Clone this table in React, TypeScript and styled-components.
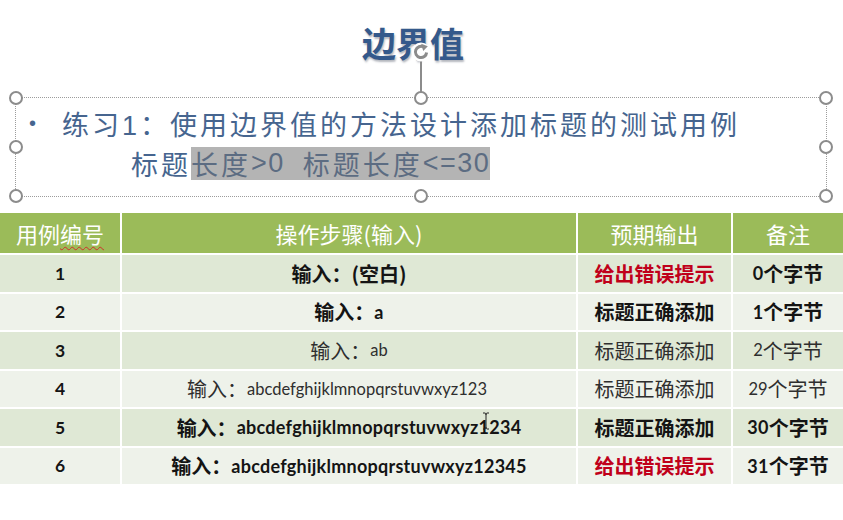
import React from "react";
import styled, { createGlobalStyle } from "styled-components";

const Global = createGlobalStyle`
  html, body { margin: 0; padding: 0; background: #ffffff; }
  body { font-family: "Liberation Sans", "Noto Sans CJK SC", sans-serif; }
`;

const CJK = `"Liberation Sans", "Noto Sans CJK SC", sans-serif`;
const TABLE_FONT = `"Lato", "Noto Sans CJK SC", sans-serif`;

const Slide = styled.div`
  position: relative;
  width: 843px;
  height: 520px;
  background: #ffffff;
  display: flex;
  flex-direction: column;
  overflow: hidden;
`;

const TitleBar = styled.header`
  height: 97px;
  box-sizing: border-box;
  padding-top: 23px;
  display: flex;
  justify-content: center;
  align-items: flex-start;
`;

const Title = styled.h1`
  margin: 0 17px 0 0;
  font: 700 34px/40px "Noto Sans CJK SC", sans-serif;
  color: #34598b;
  text-shadow: 1px 2px 2px rgba(40, 50, 70, 0.35);
`;

const TextBox = styled.section`
  position: relative;
  box-sizing: border-box;
  height: 100px;
  margin: 0 16px 0 15px;
  border: 1px dotted #9c9c9c;
  padding-top: 5px;
  font-family: ${CJK};
  font-size: 27px;
  color: #46658f;
  letter-spacing: 3px;
`;

const Line = styled.div<{ $indent: number }>`
  height: 40px;
  display: flex;
  align-items: center;
  padding-left: ${(p) => p.$indent}px;
  white-space: pre;
`;

const Bullet = styled.span`
  width: 33px;
  font-size: 20px;
  letter-spacing: 0;
  color: #46658f;
`;

const Highlight = styled.span`
  height: 33px;
  display: flex;
  align-items: center;
  background: #b4b4b4;
  color: #5c6c82;
`;

const Latin = styled.span`
  letter-spacing: 1.5px;
`;

const Handle = styled.span<{ $x: number; $y: number }>`
  position: absolute;
  left: calc(${(p) => p.$x}% - 7px);
  top: calc(${(p) => p.$y}% - 7px);
  width: 10px;
  height: 10px;
  border-radius: 50%;
  border: 2px solid #8c8c8c;
  background: #ffffff;
`;

const RotateStem = styled.span`
  position: absolute;
  left: calc(50% - 1px);
  bottom: calc(100% + 6px);
  width: 2px;
  height: 33px;
  background: #8c8c8c;
`;

const RotateIcon = styled.svg`
  position: absolute;
  left: calc(50% - 10px);
  bottom: calc(100% + 36px);
  width: 20px;
  height: 20px;
`;

const Table = styled.div`
  margin-top: 16px;
  display: flex;
  flex-direction: column;
  gap: 2px;
  font-family: ${TABLE_FONT};
`;

const Row = styled.div<{ $h: number }>`
  display: grid;
  grid-template-columns: 120px 454px 153px 1fr;
  column-gap: 2px;
  height: ${(p) => p.$h}px;
`;

type Band = "head" | "odd" | "even";
const bandColor: Record<Band, string> = {
  head: "#9bbb59",
  odd: "#dfe8d5",
  even: "#eef2ea",
};

const Cell = styled.div<{ $band: Band; $bold?: boolean; $red?: boolean; $num?: boolean; $shift?: number }>`
  display: flex;
  align-items: center;
  justify-content: center;
  white-space: pre;
  padding-right: ${(p) => p.$shift ?? 0}px;
  background: ${(p) => bandColor[p.$band]};
  font-size: ${(p) => (p.$num ? 17.5 : p.$bold ? 18 : 16.5)}px;
  letter-spacing: ${(p) => (p.$bold && !p.$num ? 0.25 : 0)}px;
  font-weight: ${(p) => (p.$bold ? 700 : 400)};
  color: ${(p) => (p.$band === "head" ? "#ffffff" : p.$red ? "#c0001a" : p.$bold ? "#141414" : "#2e2e2e")};
`;

const Zh = styled.span<{ $size?: number }>`
  font-size: ${(p) => p.$size ?? 20}px;
  letter-spacing: 0;
  font-family: "Noto Sans CJK SC", sans-serif;
`;

const Typo = styled.span`
  text-decoration: underline wavy #d0302a;
  text-decoration-thickness: 1px;
  text-underline-offset: 3px;
`;

const IBeam = styled.svg`
  position: absolute;
  left: 482px;
  top: 412px;
  width: 8px;
  height: 18px;
`;

type RowData = {
  no: string;
  input: string;
  out: string;
  note: string;
  bold: boolean;
  red: boolean;
  shift?: number;
};

const rows: RowData[] = [
  { no: "1", input: "(空白)", out: "给出错误提示", note: "0", bold: true, red: true },
  { no: "2", input: "a", out: "标题正确添加", note: "1", bold: true, red: false },
  { no: "3", input: "ab", out: "标题正确添加", note: "2", bold: false, red: false },
  { no: "4", input: "abcdefghijklmnopqrstuvwxyz123", out: "标题正确添加", note: "29", bold: false, red: false, shift: 24 },
  { no: "5", input: "abcdefghijklmnopqrstuvwxyz1234", out: "标题正确添加", note: "30", bold: true, red: false },
  { no: "6", input: "abcdefghijklmnopqrstuvwxyz12345", out: "给出错误提示", note: "31", bold: true, red: true },
];

export default function App() {
  return (
    <>
      <Global />
      <Slide>
        <TitleBar>
          <Title>边界值</Title>
        </TitleBar>

        <TextBox>
          <Line $indent={13}>
            <Bullet>•</Bullet>
            练习1：使用边界值的方法设计添加标题的测试用例
          </Line>
          <Line $indent={115}>
            标题
            <Highlight>
              长度<Latin>&gt;0  </Latin>标题长度<Latin>&lt;=30</Latin>
            </Highlight>
          </Line>
          <RotateStem />
          <RotateIcon viewBox="0 0 20 20">
            <circle cx="10" cy="10" r="9.5" fill="#ffffff" />
            <path d="M15.6 10.5 A5.6 5.6 0 1 1 12.6 5" fill="none" stroke="#8c8c8c" strokeWidth="3" />
            <path d="M10.2 1.8 L16.8 4.2 L12.2 9 Z" fill="#8c8c8c" />
          </RotateIcon>
          {[
            [0, 0], [50, 0], [100, 0],
            [0, 50], [100, 50],
            [0, 100], [50, 100], [100, 100],
          ].map(([x, y]) => (
            <Handle key={`${x}-${y}`} $x={x} $y={y} />
          ))}
        </TextBox>

        <Table>
          <Row $h={40}>
            <Cell $band="head"><Zh $size={22}>用例<Typo>编号</Typo></Zh></Cell>
            <Cell $band="head"><Zh $size={22}>操作步骤(输入)</Zh></Cell>
            <Cell $band="head"><Zh $size={22}>预期输出</Zh></Cell>
            <Cell $band="head"><Zh $size={22}>备注</Zh></Cell>
          </Row>
          {rows.map((r, i) => {
            const band: Band = i % 2 === 0 ? "odd" : "even";
            return (
              <Row key={r.no} $h={36.5}>
                <Cell $band={band} $bold $num>{r.no}</Cell>
                <Cell $band={band} $bold={r.bold} $shift={r.shift}>
                  <Zh>输入：</Zh>
                  {r.input === "(空白)" ? <Zh>(空白)</Zh> : r.input}
                </Cell>
                <Cell $band={band} $bold={r.bold || r.red} $red={r.red}>
                  <Zh>{r.out}</Zh>
                </Cell>
                <Cell $band={band} $bold={r.bold}>
                  {r.note}
                  <Zh>个字节</Zh>
                </Cell>
              </Row>
            );
          })}
        </Table>

        <IBeam viewBox="0 0 8 18">
          <path d="M1 1 H3 Q4 1 4 3 V15 Q4 17 3 17 H1 M7 1 H5 Q4 1 4 3 M4 15 Q4 17 5 17 H7" fill="none" stroke="#222" strokeWidth="1" />
        </IBeam>
      </Slide>
    </>
  );
}
